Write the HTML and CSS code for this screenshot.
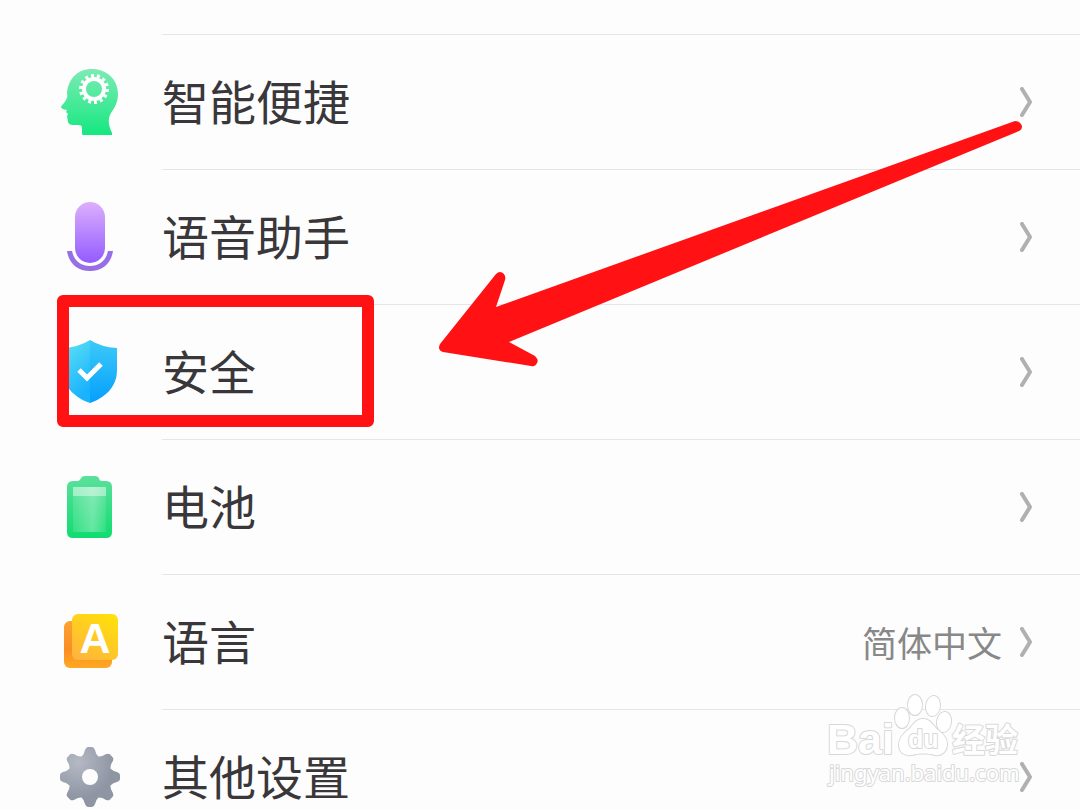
FILE: index.html
```html
<!DOCTYPE html>
<html lang="zh-CN">
<head>
    <meta charset="UTF-8">
    <meta name="viewport" content="width=device-width, initial-scale=1.0">
    <title>设置</title>
    <link rel="stylesheet" href="styles.css">
</head>
<body>
    <main class="screen">
        <ul class="settings-list">
            <li class="item">
                <a class="item-link" href="#smart">
                    <svg class="icon" viewBox="0 0 70 70" aria-hidden="true">
                        <defs>
                            <linearGradient id="head-fill" x1="0" y1="0" x2="0" y2="1">
                                <stop offset="0" stop-color="#7cebb4"/>
                                <stop offset="1" stop-color="#15e880"/>
                            </linearGradient>
                        </defs>
                        <path fill="url(#head-fill)" d="M35 2C51 1 63 12 63 27C63 35 60 40 56 46C52 53 54 59 57 66V68H28Q27 68 27 66V61Q27 58 24 58H18Q14 58 13 55L12 49L13 47L11 45L12 43Q6 42 6 40Q6 39 9 36C12 32 13 30 12 26C13 13 21 3 35 2Z"/>
                        <circle cx="39" cy="22" r="10" fill="none" stroke="#fff" stroke-width="4"/>
                        <circle cx="39" cy="22" r="13" fill="none" stroke="#fff" stroke-width="4" pathLength="56" stroke-dasharray="2 2"/>
                    </svg>
                    <span class="label">智能便捷</span>
                    <svg class="arrow" viewBox="0 0 14 30" aria-hidden="true"><path d="M3 2L11 15L3 28"/></svg>
                </a>
            </li>
            <li class="item">
                <a class="item-link" href="#voice">
                    <svg class="icon" viewBox="0 0 70 70" aria-hidden="true">
                        <defs>
                            <linearGradient id="mic-fill" x1="0" y1="0" x2="0" y2="1">
                                <stop offset="0" stop-color="#dcb0fd"/>
                                <stop offset="1" stop-color="#935bff"/>
                            </linearGradient>
                        </defs>
                        <rect x="20" y="0" width="30" height="61" rx="15" fill="url(#mic-fill)"/>
                        <path d="M12 49H17C19 59 26 64 35 64C44 64 51 59 53 49H58C56 62 47 69 35 69C23 69 14 62 12 49Z" fill="#966ee8"/>
                    </svg>
                    <span class="label">语音助手</span>
                    <svg class="arrow" viewBox="0 0 14 30" aria-hidden="true"><path d="M3 2L11 15L3 28"/></svg>
                </a>
            </li>
            <li class="item marked">
                <a class="item-link" href="#security">
                    <svg class="icon" viewBox="0 0 70 70" aria-hidden="true">
                        <defs>
                            <linearGradient id="shield-left" x1="0" y1="0" x2="0.4" y2="1">
                                <stop offset="0" stop-color="#60e3f3"/>
                                <stop offset="1" stop-color="#19b2fd"/>
                            </linearGradient>
                            <linearGradient id="shield-right" x1="0" y1="0" x2="0" y2="1">
                                <stop offset="0" stop-color="#3dcaf8"/>
                                <stop offset="1" stop-color="#059ffd"/>
                            </linearGradient>
                        </defs>
                        <path fill="url(#shield-left)" d="M35 3Q24 10 8 11V33C8 51 21 61 35 66Z"/>
                        <path fill="url(#shield-right)" d="M35 3Q46 10 62 11V33C62 51 49 61 35 66Z"/>
                        <path d="M24 33L32 41L46 27" fill="none" stroke="#fff" stroke-width="5"/>
                    </svg>
                    <span class="label">安全</span>
                    <svg class="arrow" viewBox="0 0 14 30" aria-hidden="true"><path d="M3 2L11 15L3 28"/></svg>
                </a>
            </li>
            <li class="item">
                <a class="item-link" href="#battery">
                    <svg class="icon" viewBox="0 0 70 70" aria-hidden="true">
                        <defs>
                            <linearGradient id="battery-fill" x1="0" y1="0" x2="0" y2="1">
                                <stop offset="0" stop-color="#5ce09c"/>
                                <stop offset="1" stop-color="#10dc70"/>
                            </linearGradient>
                            <linearGradient id="battery-shine" x1="0" y1="0" x2="1" y2="0">
                                <stop offset="0" stop-color="#fff" stop-opacity="0.12"/>
                                <stop offset="0.6" stop-color="#fff" stop-opacity="0.32"/>
                                <stop offset="1" stop-color="#fff" stop-opacity="0.1"/>
                            </linearGradient>
                        </defs>
                        <path fill="url(#battery-fill)" d="M18 9H23Q25 9 26 6Q27 4 30 4H40Q43 4 44 6Q44 9 47 9H51Q57 9 57 15V60Q57 66 51 66H18Q12 66 12 60V15Q12 9 18 9Z"/>
                        <rect x="18" y="15" width="33" height="45" fill="url(#battery-shine)"/>
                        <rect x="18" y="15" width="33" height="9" fill="#fff" fill-opacity="0.42"/>
                    </svg>
                    <span class="label">电池</span>
                    <svg class="arrow" viewBox="0 0 14 30" aria-hidden="true"><path d="M3 2L11 15L3 28"/></svg>
                </a>
            </li>
            <li class="item">
                <a class="item-link" href="#language">
                    <svg class="icon" viewBox="0 0 70 70" aria-hidden="true">
                        <defs>
                            <linearGradient id="lang-front" x1="0.8" y1="0" x2="0.2" y2="1">
                                <stop offset="0" stop-color="#ffe00c"/>
                                <stop offset="1" stop-color="#ffb53c"/>
                            </linearGradient>
                            <linearGradient id="lang-back" x1="0" y1="0" x2="0" y2="1">
                                <stop offset="0" stop-color="#fca230"/>
                                <stop offset="0.6" stop-color="#fa8e26"/>
                                <stop offset="1" stop-color="#ffa922"/>
                            </linearGradient>
                        </defs>
                        <rect x="9" y="14" width="48" height="47" rx="6" fill="url(#lang-back)"/>
                        <rect x="17" y="7" width="46" height="46" rx="6" fill="url(#lang-front)"/>
                        <text class="icon-letter" x="40" y="46" text-anchor="middle">A</text>
                    </svg>
                    <span class="label">语言</span>
                    <span class="value">简体中文</span>
                    <svg class="arrow" viewBox="0 0 14 30" aria-hidden="true"><path d="M3 2L11 15L3 28"/></svg>
                </a>
            </li>
            <li class="item">
                <a class="item-link" href="#other">
                    <svg class="icon" viewBox="0 0 70 70" aria-hidden="true">
                        <defs>
                            <radialGradient id="gear-fill" cx="0.3" cy="0.25" r="0.6">
                                <stop offset="0" stop-color="#b4b9c4"/>
                                <stop offset="1" stop-color="#8f95a3"/>
                            </radialGradient>
                            <path id="tooth" d="M23 17Q29 14 30 8Q31 5 33 5H37Q39 5 40 8Q41 14 47 17L35 35Z"/>
                            <clipPath id="gear-shape">
                                <circle cx="35" cy="35" r="22"/>
                                <use href="#tooth"/>
                                <use href="#tooth" transform="rotate(45 35 35)"/>
                                <use href="#tooth" transform="rotate(90 35 35)"/>
                                <use href="#tooth" transform="rotate(135 35 35)"/>
                                <use href="#tooth" transform="rotate(180 35 35)"/>
                                <use href="#tooth" transform="rotate(225 35 35)"/>
                                <use href="#tooth" transform="rotate(270 35 35)"/>
                                <use href="#tooth" transform="rotate(315 35 35)"/>
                            </clipPath>
                        </defs>
                        <rect x="5" y="5" width="60" height="60" fill="url(#gear-fill)" clip-path="url(#gear-shape)"/>
                        <circle cx="35" cy="35" r="8" fill="#fdfdfd"/>
                    </svg>
                    <span class="label">其他设置</span>
                    <svg class="arrow" viewBox="0 0 14 30" aria-hidden="true"><path d="M3 2L11 15L3 28"/></svg>
                </a>
            </li>
        </ul>

        <!-- panah merah ke menu 安全 -->
        <svg class="pointer" viewBox="432 112 600 260" aria-hidden="true">
            <path fill="#ff1114" d="M440 344L496 274Q500 270 504 274Q506 277 505 280L496 307L1015 121Q1020 121 1022 126Q1022 130 1019 131L509 342L535 356Q539 360 537 363Q535 367 531 366L443 352Q437 350 440 344Z"/>
        </svg>

        <svg class="watermark" viewBox="825 690 200 100">
            <g class="paw">
                <ellipse cx="902" cy="718" rx="7" ry="10"/>
                <ellipse cx="915" cy="705" rx="7" ry="10"/>
                <ellipse cx="933" cy="706" rx="7" ry="10" transform="rotate(8 933 706)"/>
                <ellipse cx="944" cy="722" rx="7" ry="10" transform="rotate(8 944 722)"/>
                <path d="M923 719C931 719 933 726 938 730C943 734 947 738 947 744C947 752 941 756 935 755C929 753 918 753 912 755C904 756 899 752 899 745C899 738 903 734 908 730C913 726 915 719 923 719Z"/>
            </g>
            <text class="mark-big" x="827" y="754">Bai</text>
            <text class="mark-du" x="908" y="748">du</text>
            <text class="mark-cn" x="952" y="752">经验</text>
            <text class="mark-url" x="829" y="781">jingyan.baidu.com</text>
        </svg>
    </main>
</body>
</html>
```
FILE: styles.css
```css
body {
    font-family: "Noto Sans CJK SC", sans-serif;
    background-color: #fdfdfd;
    color: #39373a;
    margin: 0;
}

.screen {
    position: relative;
    height: 100vh;
    overflow: hidden;
}

.settings-list {
    list-style-type: none;
    margin: 0;
    padding: 34px 0 0;
}

.item {
    position: relative;
}

.item::before {
    content: "";
    display: block;
    height: 1px;
    margin-left: 162px;
    background-color: #e6e6e6;
}

.item-link {
    display: flex;
    align-items: center;
    height: 134px;
    padding: 0 47px 0 55px;
    color: inherit;
    text-decoration: none;
}

.icon {
    width: 70px;
    height: 70px;
    margin-right: 37px;
}

.icon-letter {
    font-family: "Liberation Sans", sans-serif;
    font-size: 43px;
    font-weight: bold;
    fill: #fff;
}

.label {
    flex: 1;
    padding-bottom: 5px;
    font-size: 47px;
    line-height: 70px;
}

.value {
    font-size: 35px;
    line-height: 52px;
    color: #888;
}

.arrow {
    width: 14px;
    height: 30px;
    margin-left: 17px;
    fill: none;
    stroke: #b0b0b0;
    stroke-width: 4;
    stroke-linecap: round;
    stroke-linejoin: round;
}

/* kotak merah */
.marked::after {
    content: "";
    position: absolute;
    top: -9px;
    left: 57px;
    width: 317px;
    height: 132px;
    box-sizing: border-box;
    border: 12px solid #ff1114;
    border-radius: 6px;
    pointer-events: none;
}

.pointer {
    position: absolute;
    top: 112px;
    left: 432px;
    width: 600px;
    height: 260px;
    pointer-events: none;
}

.watermark {
    position: absolute;
    right: 55px;
    bottom: 20px;
    width: 200px;
    height: 100px;
    fill: #fff;
    stroke: #d8d8d8;
    stroke-width: 2;
    stroke-linejoin: round;
    paint-order: stroke;
    pointer-events: none;
}

.mark-big,
.mark-du {
    font-family: "Liberation Sans", sans-serif;
    font-weight: bold;
}

.mark-big {
    font-size: 43px;
}

.mark-du {
    font-size: 25px;
}

.mark-cn {
    font-size: 33px;
    font-weight: bold;
}

.mark-url {
    font-family: "Noto Sans", sans-serif;
    font-size: 22px;
}
```
